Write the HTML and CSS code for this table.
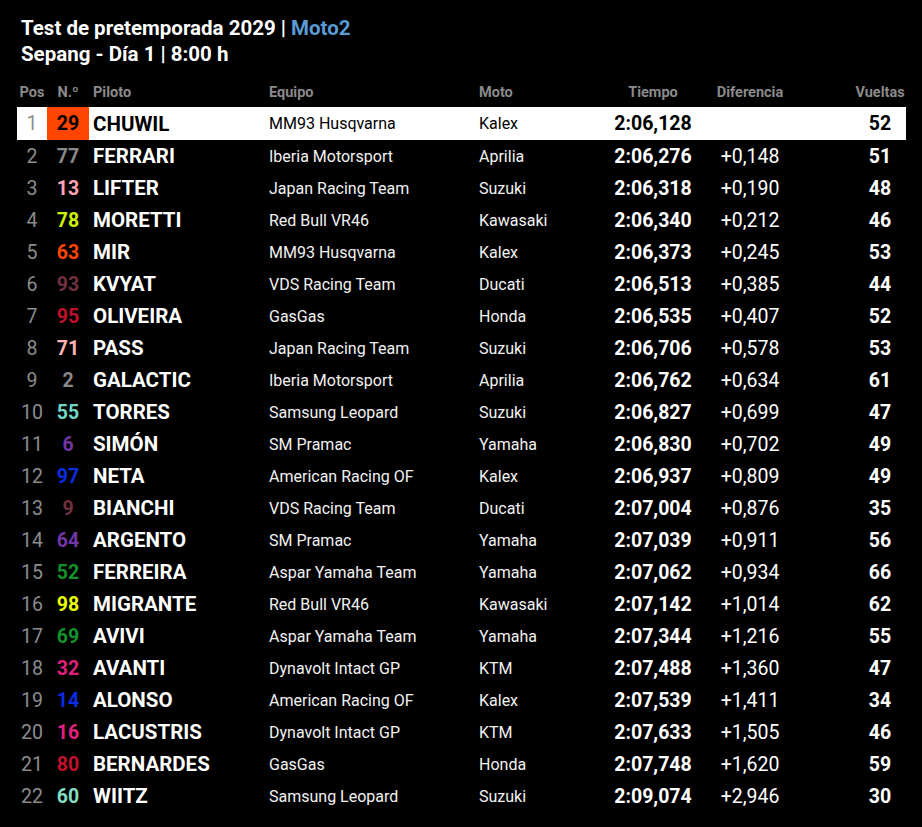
FILE: index.html
```html
<!DOCTYPE html>
<html lang="es">
<head>
<meta charset="utf-8">
<title>Test de pretemporada 2029 | Moto2</title>
<link rel="stylesheet" href="styles.css">
</head>
<body>
<div class="page">
  <header class="title">
    <h1>Test de pretemporada 2029 | <span class="cat">Moto2</span></h1>
    <h2>Sepang - Día 1 | 8:00 h</h2>
  </header>
  <div class="table">
    <div class="row head">
      <div class="pos">Pos</div><div class="num">N.º</div><div class="rider">Piloto</div><div class="team">Equipo</div><div class="bike">Moto</div><div class="time">Tiempo</div><div class="diff">Diferencia</div><div class="gap"></div><div class="laps">Vueltas</div>
    </div>
    <div class="row first"><div class="pos">1</div><div class="num n-orange">29</div><div class="rider">CHUWIL</div><div class="team">MM93 Husqvarna</div><div class="bike">Kalex</div><div class="time">2:06,128</div><div class="diff"></div><div class="gap"></div><div class="laps">52</div></div>
    <div class="row"><div class="pos">2</div><div class="num c-gray">77</div><div class="rider">FERRARI</div><div class="team">Iberia Motorsport</div><div class="bike">Aprilia</div><div class="time">2:06,276</div><div class="diff">+0,148</div><div class="gap"></div><div class="laps">51</div></div>
    <div class="row"><div class="pos">3</div><div class="num c-pink">13</div><div class="rider">LIFTER</div><div class="team">Japan Racing Team</div><div class="bike">Suzuki</div><div class="time">2:06,318</div><div class="diff">+0,190</div><div class="gap"></div><div class="laps">48</div></div>
    <div class="row"><div class="pos">4</div><div class="num c-lime">78</div><div class="rider">MORETTI</div><div class="team">Red Bull VR46</div><div class="bike">Kawasaki</div><div class="time">2:06,340</div><div class="diff">+0,212</div><div class="gap"></div><div class="laps">46</div></div>
    <div class="row"><div class="pos">5</div><div class="num c-orange">63</div><div class="rider">MIR</div><div class="team">MM93 Husqvarna</div><div class="bike">Kalex</div><div class="time">2:06,373</div><div class="diff">+0,245</div><div class="gap"></div><div class="laps">53</div></div>
    <div class="row"><div class="pos">6</div><div class="num c-maroon">93</div><div class="rider">KVYAT</div><div class="team">VDS Racing Team</div><div class="bike">Ducati</div><div class="time">2:06,513</div><div class="diff">+0,385</div><div class="gap"></div><div class="laps">44</div></div>
    <div class="row"><div class="pos">7</div><div class="num c-crimson">95</div><div class="rider">OLIVEIRA</div><div class="team">GasGas</div><div class="bike">Honda</div><div class="time">2:06,535</div><div class="diff">+0,407</div><div class="gap"></div><div class="laps">52</div></div>
    <div class="row"><div class="pos">8</div><div class="num c-salmon">71</div><div class="rider">PASS</div><div class="team">Japan Racing Team</div><div class="bike">Suzuki</div><div class="time">2:06,706</div><div class="diff">+0,578</div><div class="gap"></div><div class="laps">53</div></div>
    <div class="row"><div class="pos">9</div><div class="num c-gray">2</div><div class="rider">GALACTIC</div><div class="team">Iberia Motorsport</div><div class="bike">Aprilia</div><div class="time">2:06,762</div><div class="diff">+0,634</div><div class="gap"></div><div class="laps">61</div></div>
    <div class="row"><div class="pos">10</div><div class="num c-teal">55</div><div class="rider">TORRES</div><div class="team">Samsung Leopard</div><div class="bike">Suzuki</div><div class="time">2:06,827</div><div class="diff">+0,699</div><div class="gap"></div><div class="laps">47</div></div>
    <div class="row"><div class="pos">11</div><div class="num c-purple">6</div><div class="rider">SIMÓN</div><div class="team">SM Pramac</div><div class="bike">Yamaha</div><div class="time">2:06,830</div><div class="diff">+0,702</div><div class="gap"></div><div class="laps">49</div></div>
    <div class="row"><div class="pos">12</div><div class="num c-blue">97</div><div class="rider">NETA</div><div class="team">American Racing OF</div><div class="bike">Kalex</div><div class="time">2:06,937</div><div class="diff">+0,809</div><div class="gap"></div><div class="laps">49</div></div>
    <div class="row"><div class="pos">13</div><div class="num c-maroon">9</div><div class="rider">BIANCHI</div><div class="team">VDS Racing Team</div><div class="bike">Ducati</div><div class="time">2:07,004</div><div class="diff">+0,876</div><div class="gap"></div><div class="laps">35</div></div>
    <div class="row"><div class="pos">14</div><div class="num c-purple">64</div><div class="rider">ARGENTO</div><div class="team">SM Pramac</div><div class="bike">Yamaha</div><div class="time">2:07,039</div><div class="diff">+0,911</div><div class="gap"></div><div class="laps">56</div></div>
    <div class="row"><div class="pos">15</div><div class="num c-green">52</div><div class="rider">FERREIRA</div><div class="team">Aspar Yamaha Team</div><div class="bike">Yamaha</div><div class="time">2:07,062</div><div class="diff">+0,934</div><div class="gap"></div><div class="laps">66</div></div>
    <div class="row"><div class="pos">16</div><div class="num c-yellow">98</div><div class="rider">MIGRANTE</div><div class="team">Red Bull VR46</div><div class="bike">Kawasaki</div><div class="time">2:07,142</div><div class="diff">+1,014</div><div class="gap"></div><div class="laps">62</div></div>
    <div class="row"><div class="pos">17</div><div class="num c-green">69</div><div class="rider">AVIVI</div><div class="team">Aspar Yamaha Team</div><div class="bike">Yamaha</div><div class="time">2:07,344</div><div class="diff">+1,216</div><div class="gap"></div><div class="laps">55</div></div>
    <div class="row"><div class="pos">18</div><div class="num c-magenta">32</div><div class="rider">AVANTI</div><div class="team">Dynavolt Intact GP</div><div class="bike">KTM</div><div class="time">2:07,488</div><div class="diff">+1,360</div><div class="gap"></div><div class="laps">47</div></div>
    <div class="row"><div class="pos">19</div><div class="num c-blue">14</div><div class="rider">ALONSO</div><div class="team">American Racing OF</div><div class="bike">Kalex</div><div class="time">2:07,539</div><div class="diff">+1,411</div><div class="gap"></div><div class="laps">34</div></div>
    <div class="row"><div class="pos">20</div><div class="num c-magenta">16</div><div class="rider">LACUSTRIS</div><div class="team">Dynavolt Intact GP</div><div class="bike">KTM</div><div class="time">2:07,633</div><div class="diff">+1,505</div><div class="gap"></div><div class="laps">46</div></div>
    <div class="row"><div class="pos">21</div><div class="num c-crimson">80</div><div class="rider">BERNARDES</div><div class="team">GasGas</div><div class="bike">Honda</div><div class="time">2:07,748</div><div class="diff">+1,620</div><div class="gap"></div><div class="laps">59</div></div>
    <div class="row"><div class="pos">22</div><div class="num c-teal2">60</div><div class="rider">WIITZ</div><div class="team">Samsung Leopard</div><div class="bike">Suzuki</div><div class="time">2:09,074</div><div class="diff">+2,946</div><div class="gap"></div><div class="laps">30</div></div>
  </div>
</div>
</body>
</html>
```

FILE: styles.css
```css
html, body {
  margin: 0;
  padding: 0;
  background: #000;
}
body {
  font-family: "Roboto", "Liberation Sans", sans-serif;
  color: #fff;
  width: 922px;
  height: 827px;
  overflow: hidden;
}
.page {
  padding: 15px 16px 0 17px;
}
.title {
  padding-left: 4px;
}
.title h1,
.title h2 {
  margin: 0;
  font-size: 20.5px;
  font-weight: 700;
  line-height: 26px;
  color: #fff;
}
.title .cat {
  color: #5b9bd5;
}
.table {
  margin-top: 16px;
}
.row {
  display: grid;
  grid-template-columns: 30px 42px 176px 210px 120px 116px 78px 65px 52px;
  height: 32px;
  align-items: center;
  font-size: 19.5px;
}
.row > div {
  height: 100%;
  display: flex;
  align-items: center;
  white-space: nowrap;
}
.row.head {
  box-sizing: border-box;
  height: 24px;
  padding-top: 1px;
  font-size: 14.5px;
  font-weight: 700;
  color: #8a8a8a;
  align-items: start;
}
.row.head > div {
  color: #8a8a8a;
  align-items: flex-start;
}
.pos {
  justify-content: center;
  color: #8c8c8c;
}
.num {
  justify-content: center;
  font-weight: 700;
}
.rider {
  padding-left: 4px;
  font-weight: 700;
  font-size: 20.5px;
}
.team, .bike {
  padding-left: 4px;
  font-size: 16px;
  color: #f2f2f2;
}
.time {
  justify-content: center;
  font-weight: 700;
}
.diff {
  justify-content: center;
}
.laps {
  justify-content: center;
  font-weight: 700;
}
.row.head .rider, .row.head .team, .row.head .bike { font-size: 14.5px; }

.row.first {
  background: #fff;
  color: #000;
  height: 33px;
}
.row.first .pos { color: #8c8c8c; }
.row.first .team, .row.first .bike { color: #000; }
.n-orange { background: #ff4500; color: #000; }

.c-gray { color: #8a8a8a; }
.c-pink { color: #ffa6b6; }
.c-lime { color: #ccf000; }
.c-orange { color: #ff4500; }
.c-maroon { color: #72303e; }
.c-crimson { color: #c0102c; }
.c-salmon { color: #ffb2b0; }
.c-teal { color: #72d6c6; }
.c-teal2 { color: #84dcc4; }
.c-purple { color: #7036a6; }
.c-blue { color: #0c2ce0; }
.c-green { color: #12922a; }
.c-yellow { color: #eaff00; }
.c-magenta { color: #e0207c; }
```
